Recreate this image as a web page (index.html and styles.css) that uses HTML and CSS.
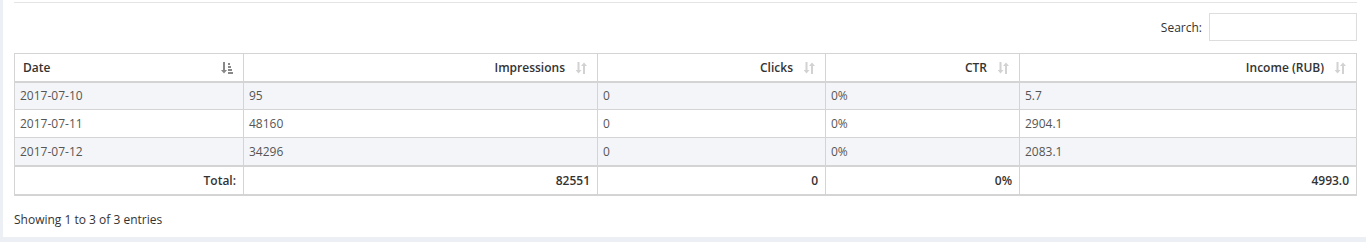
FILE: index.html
```html
<!DOCTYPE html>
<html>
<head>
<meta charset="utf-8">
<link rel="stylesheet" href="styles.css">
</head>
<body>
<div class="panel">
  <div class="box-body">
    <div class="toolbar">
      <label class="search">Search: <input type="search" class="search-input"></label>
    </div>
    <table class="data">
      <thead>
        <tr>
          <th class="left col-date"><div class="th-in"><span>Date</span>
            <svg class="sort sort-active" width="12" height="12" viewBox="0 0 12 12"><path d="M2 0h2v8h2l-3 3.5L0 8h2z" fill="#888"/><rect x="7" y="1" width="2" height="2" fill="#888"/><rect x="7" y="4" width="3" height="2" fill="#888"/><rect x="7" y="7" width="4" height="2" fill="#888"/><rect x="7" y="10" width="5" height="2" fill="#888"/></svg></div></th>
          <th class="right col-imp"><div class="th-in end"><span>Impressions</span>
            <svg class="sort" width="11" height="12" viewBox="0 0 11 12"><path d="M1.5 0h2v8h2l-3 3.5-3-3.5h2z" fill="#d2d2d2"/><path d="M7 12h2V4h2L8 0.5 5 4h2z" fill="#d2d2d2"/></svg></div></th>
          <th class="right col-clk"><div class="th-in end"><span>Clicks</span>
            <svg class="sort" width="11" height="12" viewBox="0 0 11 12"><path d="M1.5 0h2v8h2l-3 3.5-3-3.5h2z" fill="#d2d2d2"/><path d="M7 12h2V4h2L8 0.5 5 4h2z" fill="#d2d2d2"/></svg></div></th>
          <th class="right col-ctr"><div class="th-in end"><span>CTR</span>
            <svg class="sort" width="11" height="12" viewBox="0 0 11 12"><path d="M1.5 0h2v8h2l-3 3.5-3-3.5h2z" fill="#d2d2d2"/><path d="M7 12h2V4h2L8 0.5 5 4h2z" fill="#d2d2d2"/></svg></div></th>
          <th class="right col-inc"><div class="th-in end"><span>Income (RUB)</span>
            <svg class="sort" width="11" height="12" viewBox="0 0 11 12"><path d="M1.5 0h2v8h2l-3 3.5-3-3.5h2z" fill="#d2d2d2"/><path d="M7 12h2V4h2L8 0.5 5 4h2z" fill="#d2d2d2"/></svg></div></th>
        </tr>
      </thead>
      <tbody>
        <tr class="odd"><td>2017-07-10</td><td>95</td><td>0</td><td>0%</td><td>5.7</td></tr>
        <tr><td>2017-07-11</td><td>48160</td><td>0</td><td>0%</td><td>2904.1</td></tr>
        <tr class="odd"><td>2017-07-12</td><td>34296</td><td>0</td><td>0%</td><td>2083.1</td></tr>
      </tbody>
      <tfoot>
        <tr><th>Total:</th><th>82551</th><th>0</th><th>0%</th><th>4993.0</th></tr>
      </tfoot>
    </table>
    <div class="info">Showing 1 to 3 of 3 entries</div>
  </div>
</div>
</body>
</html>
```

FILE: styles.css
```css
html, body {
  margin: 0;
  padding: 0;
  background: #ecf0f5;
  font-family: "Open Sans", "Liberation Sans", sans-serif;
  font-size: 12px;
  color: #333;
}
.panel {
  margin-left: 3px;
  width: 1380px;
  height: 237px;
  background: #fff;
}
.box-body {
  padding: 2px 0 0 11px;
  width: 1343px;
}
.toolbar {
  border-top: 1px solid #e4e4e4;
  display: flex;
  justify-content: flex-end;
  padding: 10px 0 12px;
}
.search {
  display: flex;
  align-items: center;
  gap: 7px;
  color: #333;
  font-size: 12px;
}
.search-input {
  width: 148px;
  height: 28px;
  box-sizing: border-box;
  border: 1px solid #ddd;
  margin: 0;
  padding: 0;
  background: #fff;
  outline: none;
}
.data {
  border-collapse: collapse;
  width: 1343px;
  table-layout: fixed;
  border: 1px solid #d4d4d4;
}
.col-date { width: 229px; }
.col-imp { width: 354px; }
.col-clk { width: 228px; }
.col-ctr { width: 194px; }
.data th, .data td {
  border: 1px solid #d4d4d4;
  padding: 0 8px;
  line-height: 17px;
  box-sizing: border-box;
  white-space: nowrap;
}
.data thead th {
  height: 28px;
  font-weight: 600;
  color: #333;
  border-bottom: 2px solid #d4d4d4;
  padding: 0 10px 0 8px;
  vertical-align: middle;
}
.th-in {
  display: flex;
  align-items: center;
  justify-content: space-between;
}
.th-in.end { justify-content: flex-end; gap: 11px; }
.sort { display: block; margin-top: 2px; }
.data td {
  color: #555;
  font-size: 12px;
  height: 28px;
  padding: 0 5px;
}
.data tbody tr.odd td { background: #f4f5f8; }
.data tfoot th {
  height: 29px;
  text-align: right;
  font-weight: 600;
  color: #333;
  border-top: 2px solid #d4d4d4;
  border-bottom: 2px solid #d4d4d4;
  padding: 0 7px 0 8px;
}
.info {
  padding-top: 15px;
  color: #333;
  font-size: 12px;
}
```
